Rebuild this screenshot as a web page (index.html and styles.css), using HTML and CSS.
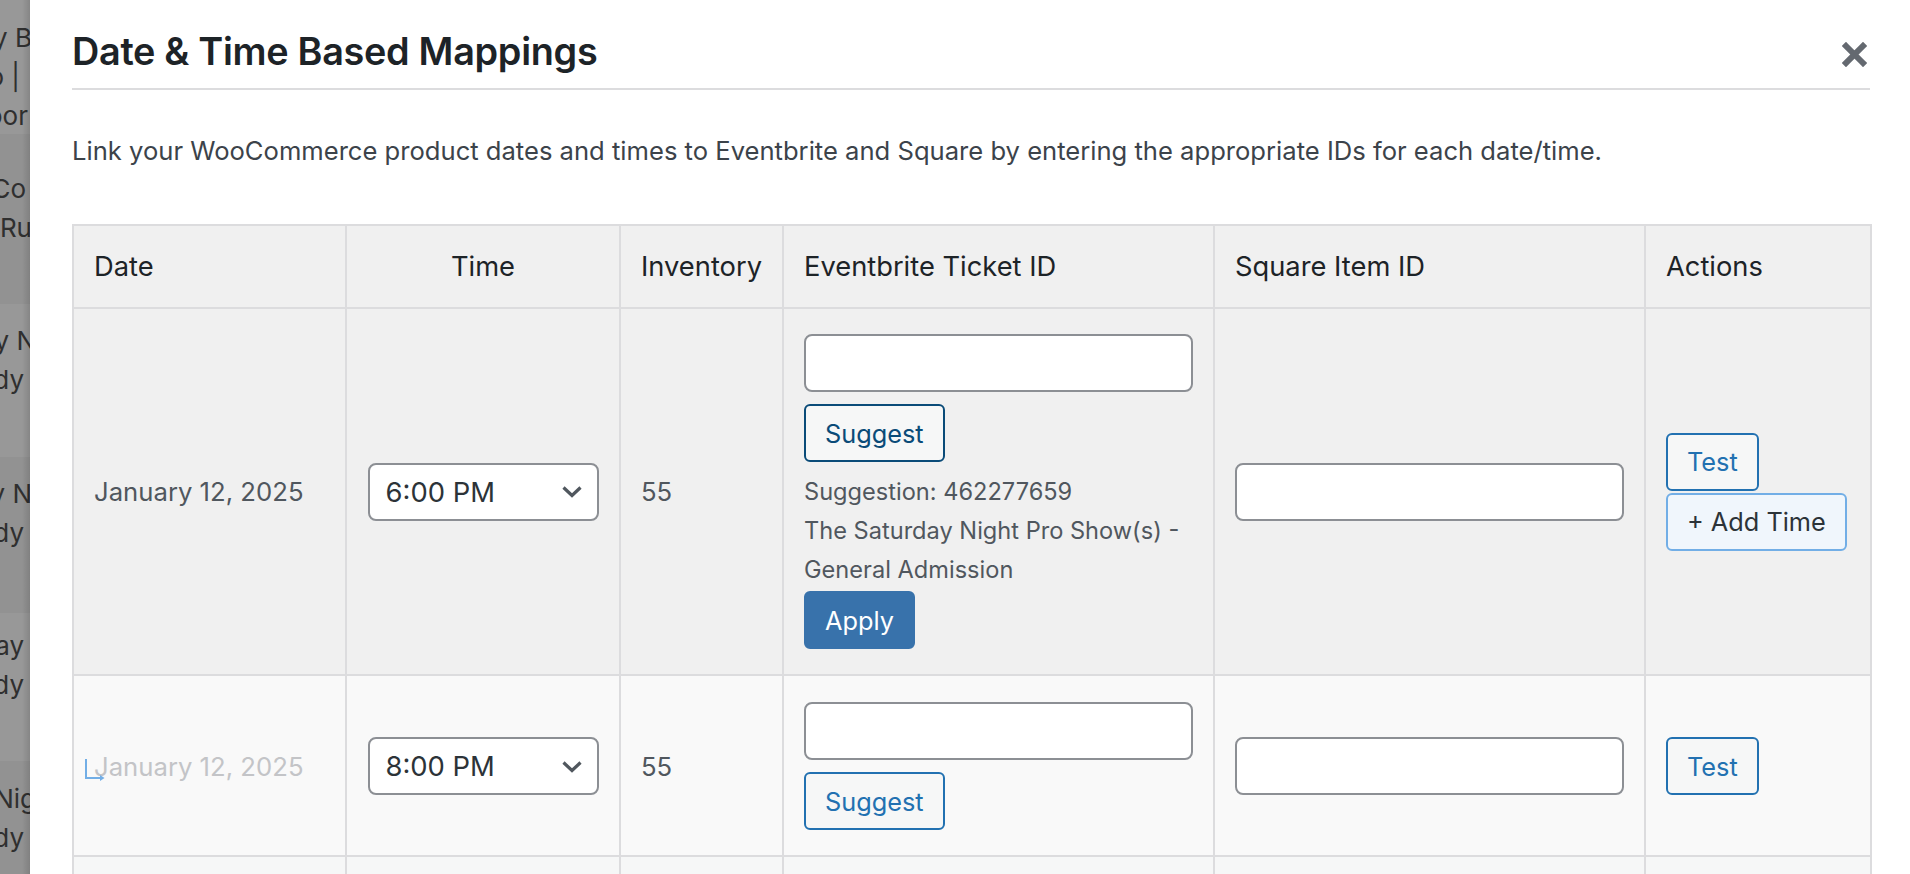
FILE: index.html
```html
<!DOCTYPE html>
<html lang="en">
<head>
<meta charset="utf-8">
<title>Date &amp; Time Based Mappings</title>
<link rel="stylesheet" href="styles.css">
</head>
<body>
<aside class="backdrop" aria-hidden="true">
  <div class="bd-band b0">
    <div class="bd-line"><span class="m-2">Comedy B</span></div>
    <div class="bd-line"><span class="m10">Live Pro |</span></div>
    <div class="bd-line"><span class="m2">Indoor</span></div>
  </div>
  <div class="bd-band b1 dark">
    <div class="bd-line"><span class="m4">Stand-up Co</span></div>
    <div class="bd-line"><span class="m-2">Open Mic Ru</span></div>
  </div>
  <div class="bd-band b2">
    <div class="bd-line"><span class="m-6">Saturday N</span></div>
    <div class="bd-line"><span class="m6">Comedy</span></div>
  </div>
  <div class="bd-band b3 dark">
    <div class="bd-line"><span class="m-2">Saturday N</span></div>
    <div class="bd-line"><span class="m6">Comedy</span></div>
  </div>
  <div class="bd-band b4">
    <div class="bd-line"><span class="m6">Saturday</span></div>
    <div class="bd-line"><span class="m6">Comedy</span></div>
  </div>
  <div class="bd-band b5 dark">
    <div class="bd-line"><span class="m-6">Friday Nig</span></div>
    <div class="bd-line"><span class="m6">Comedy</span></div>
  </div>
</aside>

<main class="modal">
  <header class="modal-header">
    <h2 class="modal-title">Date &amp; Time Based Mappings</h2>
    <button class="close-btn" type="button" aria-label="Close">
      <svg width="25" height="25" viewBox="0 0 25 25" aria-hidden="true"><path d="M4 4 L21 21 M21 4 L4 21" stroke="currentColor" stroke-width="6" stroke-linecap="square" fill="none"/></svg>
    </button>
  </header>

  <p class="intro">Link your WooCommerce product dates and times to Eventbrite and Square by entering the appropriate IDs for each date/time.</p>

  <table class="map-table">
    <colgroup>
      <col class="col-date">
      <col class="col-time">
      <col class="col-inv">
      <col class="col-eb">
      <col class="col-sq">
      <col class="col-act">
    </colgroup>
    <thead>
      <tr>
        <th>Date</th>
        <th class="center">Time</th>
        <th>Inventory</th>
        <th>Eventbrite Ticket ID</th>
        <th>Square Item ID</th>
        <th>Actions</th>
      </tr>
    </thead>
    <tbody>
      <tr class="row-parent">
        <td class="date">January 12, 2025</td>
        <td class="center">
          <div class="select"><span>6:00 PM</span><svg class="chev" width="22" height="13" viewBox="0 0 22 13" aria-hidden="true"><path d="M2.5 2.5 L11 10.5 L19.5 2.5" stroke="currentColor" stroke-width="3.2" fill="none"/></svg></div>
        </td>
        <td class="inv">55</td>
        <td>
          <div class="eb-field">
            <input class="text-input" type="text" aria-label="Eventbrite Ticket ID">
            <button class="btn btn-outline btn-focus" type="button">Suggest</button>
            <div class="suggestion">
              <div>Suggestion: 462277659</div>
              <div>The Saturday Night Pro Show(s) - General Admission</div>
            </div>
            <button class="btn btn-primary" type="button">Apply</button>
          </div>
        </td>
        <td><input class="text-input" type="text" aria-label="Square Item ID"></td>
        <td>
          <div class="actions">
            <button class="btn btn-outline" type="button">Test</button>
            <button class="btn btn-add" type="button">+ Add Time</button>
          </div>
        </td>
      </tr>
      <tr class="row-child">
        <td class="date child"><span class="child-date"><svg class="indent" width="22" height="22" viewBox="0 0 22 22" aria-hidden="true"><path d="M2 0 V19 H19" stroke="currentColor" stroke-width="2" fill="none"/><path d="M16 16 L20.5 19 L16 22 Z" fill="currentColor"/></svg>January 12, 2025</span></td>
        <td class="center">
          <div class="select"><span>8:00 PM</span><svg class="chev" width="22" height="13" viewBox="0 0 22 13" aria-hidden="true"><path d="M2.5 2.5 L11 10.5 L19.5 2.5" stroke="currentColor" stroke-width="3.2" fill="none"/></svg></div>
        </td>
        <td class="inv">55</td>
        <td>
          <div class="eb-field">
            <input class="text-input" type="text" aria-label="Eventbrite Ticket ID">
            <button class="btn btn-outline" type="button">Suggest</button>
          </div>
        </td>
        <td><input class="text-input" type="text" aria-label="Square Item ID"></td>
        <td>
          <div class="actions">
            <button class="btn btn-outline" type="button">Test</button>
          </div>
        </td>
      </tr>
      <tr class="row-child row-alt">
        <td class="date child"><span class="child-date">January 12, 2025</span></td>
        <td class="center">
          <div class="select"><span>10:00 PM</span><svg class="chev" width="22" height="13" viewBox="0 0 22 13" aria-hidden="true"><path d="M2.5 2.5 L11 10.5 L19.5 2.5" stroke="currentColor" stroke-width="3.2" fill="none"/></svg></div>
        </td>
        <td class="inv">55</td>
        <td>
          <div class="eb-field">
            <input class="text-input" type="text" aria-label="Eventbrite Ticket ID">
            <button class="btn btn-outline" type="button">Suggest</button>
          </div>
        </td>
        <td><input class="text-input" type="text" aria-label="Square Item ID"></td>
        <td>
          <div class="actions">
            <button class="btn btn-outline" type="button">Test</button>
          </div>
        </td>
      </tr>
    </tbody>
  </table>
</main>
</body>
</html>
```

FILE: styles.css
```css
* { box-sizing: border-box; }

html, body {
  margin: 0;
  height: 100%;
  overflow: hidden;
}

body {
  display: flex;
  background: #fff;
  font-family: Inter, "Noto Sans", "Liberation Sans", sans-serif;
  font-size: 25.7px;
  color: #1d2327;
}

/* ---------- dimmed page behind the modal ---------- */
.backdrop {
  flex: none;
  width: 30px;
  background: #989898;
  overflow: hidden;
  display: flex;
  flex-direction: column;
  position: relative;
  color: #2f2f2f;
  font-size: 26px;
  line-height: 39px;
}
.backdrop::after {
  content: "";
  position: absolute;
  top: 0; right: 0; bottom: 0;
  width: 8px;
  background: linear-gradient(to right, rgba(0,0,0,0), rgba(0,0,0,0.12));
}
.bd-band { flex: none; }
.bd-band.dark { background: #929292; }
.b0 { height: 134px; padding-top: 18px; }
.b1 { height: 170px; padding-top: 35px; }
.b2 { height: 153px; padding-top: 17px; }
.b3 { height: 156px; padding-top: 17px; }
.b4 { height: 148px; padding-top: 13px; }
.b5 { height: 160px; padding-top: 18px; }
.bd-line {
  display: flex;
  justify-content: flex-end;
  white-space: nowrap;
}
.m-2 { margin-right: -2px; }
.m-6 { margin-right: -6px; }
.m2 { margin-right: 2px; }
.m4 { margin-right: 4px; }
.m6 { margin-right: 6px; }
.m10 { margin-right: 10px; }

/* ---------- modal ---------- */
.modal {
  flex: 1;
  min-width: 0;
  background: #fff;
  padding: 0 40px 0 42px;
}

.modal-header {
  display: flex;
  align-items: center;
  justify-content: space-between;
  height: 90px;
  padding-top: 14px;
  border-bottom: 2px solid #dcdcde;
}

.modal-title {
  margin: 0;
  font-size: 37.8px;
  line-height: 46px;
  font-weight: 600;
  color: #1d2327;
  letter-spacing: -0.3px;
}

.close-btn {
  border: 0;
  background: transparent;
  padding: 0;
  margin: 6px 3px 0 0;
  color: #646970;
  display: flex;
}

.intro {
  margin: 41px 0 0;
  font-size: 25.6px;
  line-height: 39px;
  color: #3c434a;
}

/* ---------- table ---------- */
.map-table {
  margin-top: 54px;
  width: 1798px;
  table-layout: fixed;
  border-collapse: collapse;
  border: 2px solid #dcdcde;
}
.col-date { width: 273px; }
.col-time { width: 274px; }
.col-inv  { width: 163px; }
.col-eb   { width: 431px; }
.col-sq   { width: 431px; }
.col-act  { width: 226px; }

.map-table th,
.map-table td {
  border: 2px solid #dcdcde;
  padding: 25px 20px;
  vertical-align: middle;
  text-align: left;
}
.map-table th {
  background: #f0f0f0;
  padding-top: 21px;
  padding-bottom: 21px;
  font-size: 27.3px;
  font-weight: 400;
  line-height: 39px;
  color: #1d2327;
}
.map-table .center { text-align: center; }

.row-parent td { background: #f0f0f0; }
.row-child td { background: #f9f9f9; padding-top: 26px; }
.row-alt td { background: #f6f7f7; }

.date, .inv {
  color: #50575e;
  line-height: 39px;
}
.date.child { color: #c3c4c7; }
.child-date { position: relative; }
.indent {
  position: absolute;
  left: -10px;
  top: 8px;
  color: #72aee6;
}

/* select */
.select {
  display: inline-flex;
  align-items: center;
  justify-content: space-between;
  width: 231px;
  height: 58px;
  padding: 0 14px 0 16px;
  background: #fff;
  border: 2px solid #8c8f94;
  border-radius: 8px;
  color: #2c3338;
  font-size: 27.4px;
}
.chev { color: #50575e; }

/* inputs */
.text-input {
  display: block;
  width: 100%;
  height: 58px;
  margin: 0;
  padding: 0 16px;
  background: #fff;
  border: 2px solid #8c8f94;
  border-radius: 8px;
  font: inherit;
}

.eb-field {
  display: flex;
  flex-direction: column;
  align-items: flex-start;
}
.eb-field .btn-outline { margin-top: 12px; }

.suggestion {
  margin-top: 10px;
  color: #50575e;
  font-size: 23.6px;
  line-height: 39px;
}
.btn-primary { margin-top: 2px; }

/* buttons */
.btn {
  display: inline-flex;
  align-items: center;
  justify-content: center;
  height: 58px;
  padding: 0 19px;
  border: 2px solid;
  border-radius: 6px;
  font: inherit;
  font-size: 25.3px;
  white-space: nowrap;
  cursor: pointer;
}
.btn-outline {
  background: #f6f7f7;
  border-color: #2271b1;
  color: #2271b1;
}
.btn-outline.btn-focus {
  border-color: #0a4b78;
  color: #0a4b78;
}
.btn-primary {
  background: #3872ab;
  border-color: #3872ab;
  color: #fff;
}
.btn-add {
  background: #f0f6fc;
  border-color: #72aee6;
  color: #2c3338;
}

.actions {
  display: flex;
  flex-direction: column;
  align-items: flex-start;
  gap: 2px;
}
```
